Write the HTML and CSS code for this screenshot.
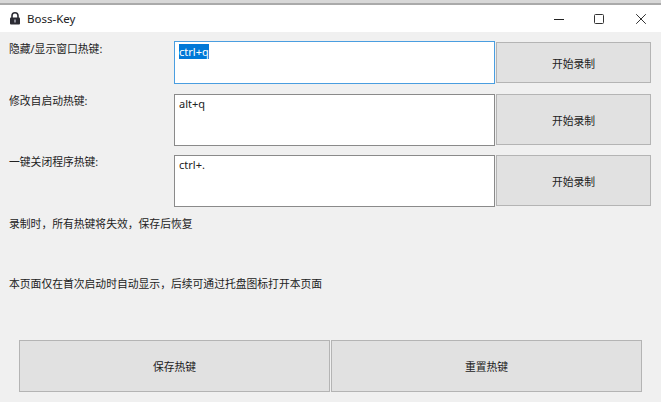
FILE: index.html
```html
<!DOCTYPE html>
<html>
<head>
  <meta charset="utf-8">
  <title>Boss-Key</title>
  <link rel="stylesheet" href="styles.css">
</head>
<body>
  <div class="window">
    <!-- Title bar -->
    <div class="titlebar">
      <svg class="lock-icon" width="12" height="13" viewBox="0 0 12 13">
        <path d="M3 6V3.8a3 3 0 0 1 6 0V6" fill="none" stroke="#2b2b33" stroke-width="1.6"/>
        <rect x="1" y="5.5" width="10" height="7" rx="1" fill="#2b2b33"/>
        <rect x="5" y="7.5" width="2" height="3" fill="#8a8a96"/>
      </svg>
      <span class="title">Boss-Key</span>
      <div class="controls">
        <svg width="10" height="10" viewBox="0 0 10 10">
          <path d="M0 5.5H10" stroke="#222" stroke-width="1"/>
        </svg>
        <svg width="10" height="10" viewBox="0 0 10 10">
          <rect x="0.5" y="0.5" width="9" height="9" rx="1" fill="none" stroke="#333" stroke-width="1"/>
        </svg>
        <svg class="close-icon" width="10" height="10" viewBox="0 0 10 10">
          <path d="M0.2 0.2L9.8 9.8M9.8 0.2L0.2 9.8" stroke="#333" stroke-width="1"/>
        </svg>
      </div>
    </div>

    <!-- Hotkey rows -->
    <div class="content">
      <div class="hotkey-row first">
        <label>隐藏/显示窗口热键:</label>
        <div class="key-input focused"><span class="selected">ctrl+q</span></div>
        <button class="record-btn">开始录制</button>
      </div>
      <div class="hotkey-row">
        <label>修改自启动热键:</label>
        <div class="key-input">alt+q</div>
        <button class="record-btn">开始录制</button>
      </div>
      <div class="hotkey-row">
        <label>一键关闭程序热键:</label>
        <div class="key-input">ctrl+.</div>
        <button class="record-btn">开始录制</button>
      </div>

      <p class="note">录制时，所有热键将失效，保存后恢复</p>
      <p class="note note-tray">本页面仅在首次启动时自动显示，后续可通过托盘图标打开本页面</p>

      <div class="actions">
        <button class="action-btn">保存热键</button>
        <button class="action-btn">重置热键</button>
      </div>
    </div>
  </div>
</body>
</html>
```

FILE: styles.css
```css
html, body {
  margin: 0;
  padding: 0;
}

body {
  width: 661px;
  height: 402px;
  overflow: hidden;
  background: #f0f0f0;
  color: #222;
  font-family: "Noto Sans", "Noto Sans CJK SC", sans-serif;
  font-size: 10.8px;
}

.window {
  display: flex;
  flex-direction: column;
  height: 402px;
  border-top: 3px solid #d8d8d8;
  box-sizing: border-box;
}

.titlebar {
  display: flex;
  align-items: center;
  height: 29px;
  padding-left: 9px;
  background: #fff;
  border-top: 2px solid #aaa;
  box-sizing: border-box;
  flex-shrink: 0;
}

.lock-icon {
  margin-right: 6px;
}

.title {
  font-size: 11.5px;
  color: #222;
}

.controls {
  display: flex;
  align-items: center;
  margin-left: auto;
  gap: 30px;
  padding-right: 15px;
}

.close-icon {
  margin-left: 2px;
}

.content {
  display: flex;
  flex-direction: column;
  padding: 9px 10px 0 9px;
}

.hotkey-row {
  display: grid;
  grid-template-columns: 164px 321px 155px;
  column-gap: 1px;
  height: 52px;
  margin-bottom: 9px;
}

.hotkey-row.first {
  height: 43px;
  margin-bottom: 10px;
}

label {
  margin-top: -1px;
  line-height: 16px;
}

.first label {
  margin-top: 0;
}

.key-input {
  padding: 1px 4px;
  background: #fff;
  border: 1px solid #8a8a8a;
  line-height: 16px;
  font-size: 11px;
  box-sizing: border-box;
}

.first .key-input {
  padding-top: 2px;
}

.key-input.focused {
  border-color: #4a9ee0;
}

.selected {
  background: #0078d7;
  color: #fff;
}

button {
  margin: 0;
  padding: 0;
  background: #e1e1e1;
  border: 1px solid #b4b4b4;
  color: #222;
  font-family: inherit;
  font-size: 10.8px;
}

.record-btn {
  height: 51px;
}

.first .record-btn {
  height: 41px;
  margin-top: 1px;
}

.note {
  margin: 0;
  line-height: 16px;
}

.note-tray {
  margin-top: 44px;
}

.actions {
  display: grid;
  grid-template-columns: 311px 311px;
  column-gap: 1px;
  margin: 48px 0 0 10px;
}

.action-btn {
  height: 52px;
}
```
